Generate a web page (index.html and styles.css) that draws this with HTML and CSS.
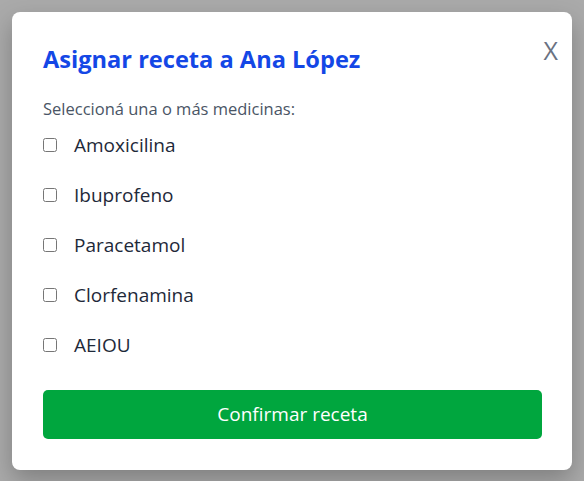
FILE: index.html
```html
<!DOCTYPE html>
<html lang="es">
<head>
<meta charset="utf-8">
<title>Asignar receta</title>
<link rel="stylesheet" href="styles.css">
</head>
<body>
<div class="overlay">
  <div class="modal">
    <button class="close" type="button">X</button>
    <h2 class="title">Asignar receta a Ana López</h2>
    <p class="subtitle">Seleccioná una o más medicinas:</p>
    <ul class="list">
      <li><label class="item"><input type="checkbox"><span>Amoxicilina</span></label></li>
      <li><label class="item"><input type="checkbox"><span>Ibuprofeno</span></label></li>
      <li><label class="item"><input type="checkbox"><span>Paracetamol</span></label></li>
      <li><label class="item"><input type="checkbox"><span>Clorfenamina</span></label></li>
      <li><label class="item"><input type="checkbox"><span>AEIOU</span></label></li>
    </ul>
    <button class="confirm" type="button">Confirmar receta</button>
  </div>
</div>
</body>
</html>
```
FILE: styles.css
```css
* { box-sizing: border-box; }
html, body { margin: 0; height: 100%; }
body {
  font-family: "Open Sans", "Noto Sans", sans-serif;
  background: #aaaaaa;
}
.overlay {
  height: 100%;
  display: flex;
  align-items: center;
  justify-content: center;
}
.modal {
  position: relative;
  width: 560px;
  background: #ffffff;
  border-radius: 8px;
  padding: 31px 30px 31px 31px;
  box-shadow: 0 10px 25px rgba(0, 0, 0, 0.25);
}
.close {
  position: absolute;
  top: 20px;
  right: 14px;
  border: 0;
  background: none;
  padding: 0;
  font-family: inherit;
  font-size: 25px;
  line-height: 36px;
  color: #6a7282;
  cursor: pointer;
}
.title {
  margin: 0;
  font-size: 23.6px;
  line-height: 32px;
  font-weight: 700;
  color: #1447e6;
}
.subtitle {
  margin: 22px 0 0;
  font-size: 16.5px;
  line-height: 24px;
  color: #4a5565;
}
.list {
  list-style: none;
  margin: 10px 0 0;
  padding: 0;
  display: flex;
  flex-direction: column;
  gap: 22px;
}
.item {
  display: flex;
  align-items: center;
  gap: 17px;
  font-size: 19px;
  line-height: 28px;
  color: #1e2939;
}
.item input {
  margin: 0;
  width: 14px;
  height: 14px;
}
.confirm {
  display: block;
  width: 100%;
  margin-top: 31px;
  height: 49px;
  border: 0;
  border-radius: 5px;
  background: #00a63e;
  color: #ffffff;
  font-family: inherit;
  font-size: 19px;
  cursor: pointer;
}
```
